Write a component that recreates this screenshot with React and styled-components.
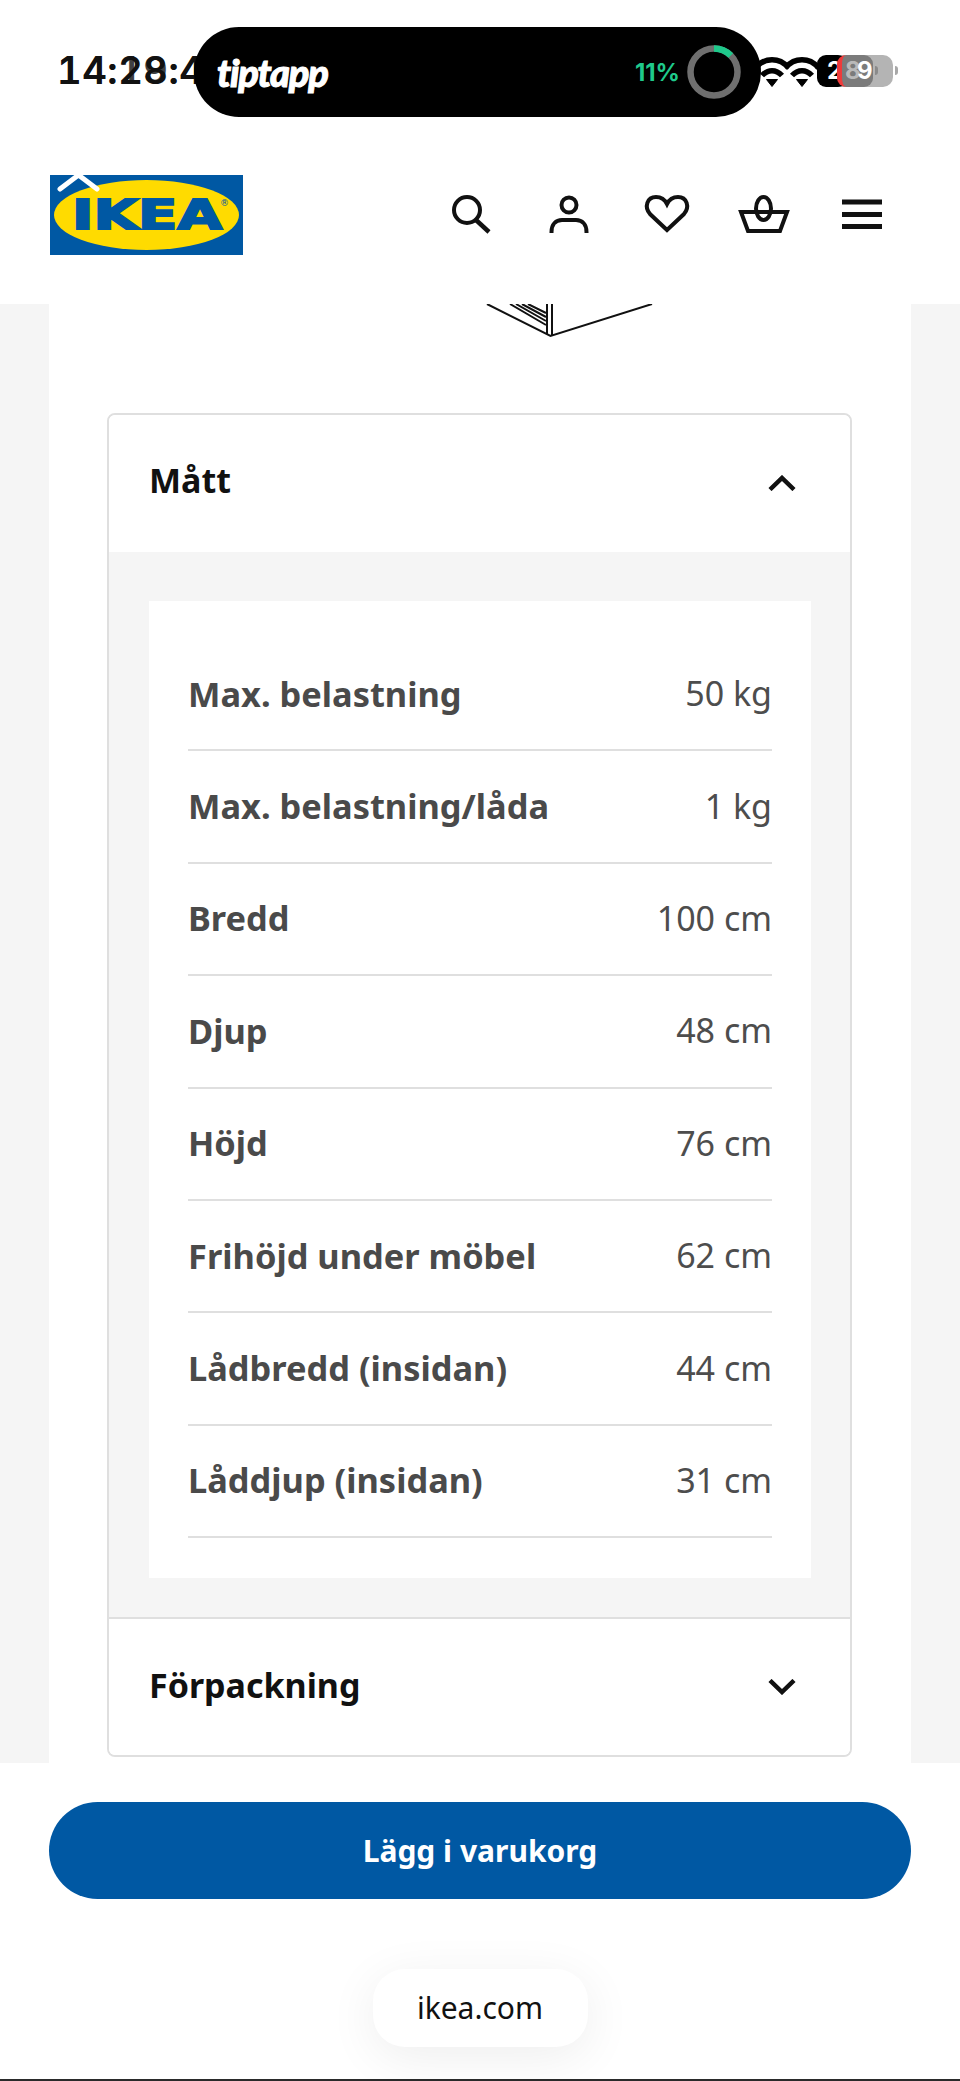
import React from "react"
import styled, { createGlobalStyle } from "styled-components"

const GlobalStyle = createGlobalStyle`
  html, body {
    margin: 0;
    padding: 0;
    background: #ffffff;
  }
  body {
    font-family: "Noto Sans", sans-serif;
  }
`

const Page = styled.div`
  position: relative;
  width: 960px;
  height: 2081px;
  display: flex;
  flex-direction: column;
  overflow: hidden;
  background: #ffffff;
`

const StatusBar = styled.div`
  position: relative;
  height: 144px;
  flex-shrink: 0;
`

const Clock = styled.span`
  position: absolute;
  left: 57px;
  top: 48px;
  font-family: Inter, sans-serif;
  font-size: 38px;
  line-height: 45px;
  font-weight: 600;
  font-variant-numeric: tabular-nums;
  letter-spacing: 0.6px;
  color: #111111;
  opacity: ${(p) => p.$opacity || 1};
`

const Island = styled.div`
  position: absolute;
  left: 194px;
  top: 27px;
  width: 567px;
  height: 90px;
  box-sizing: border-box;
  padding: 0 20px 0 23px;
  display: flex;
  align-items: center;
  justify-content: space-between;
  background: #000000;
  border-radius: 45px;
`

const TipTapp = styled.span`
  font-family: Lato, sans-serif;
  font-size: 38px;
  line-height: 40px;
  font-weight: 900;
  font-style: italic;
  letter-spacing: -1.2px;
  color: #ffffff;
  -webkit-text-stroke: 1px #ffffff;
`

const Progress = styled.div`
  display: flex;
  align-items: center;
  gap: 7px;
`

const Percent = styled.span`
  font-family: Inter, sans-serif;
  font-size: 24px;
  font-weight: 700;
  color: #1fc98b;
`

const Tray = styled.div`
  position: absolute;
  left: 762px;
  top: 54px;
  width: 140px;
  height: 36px;
`

const TrayIcon = styled.svg`
  position: absolute;
  top: 0;
  left: ${(p) => p.$left}px;
`

const BatteryBack = styled.div`
  position: absolute;
  left: 68px;
  top: 1px;
  width: 63px;
  height: 32px;
  border-radius: 10px;
  background: #b4b4b4;
`

const BatteryFront = styled.div`
  position: absolute;
  left: 55px;
  top: 1px;
  width: 30px;
  height: 32px;
  border-radius: 9px;
  background: #000000;
`

const BatteryLevel = styled.div`
  position: absolute;
  left: 75px;
  top: 1px;
  width: 36px;
  height: 32px;
  border-radius: 9px;
  background: #7b7b7b;
  border-left: 5px solid #ef3b3b;
  box-sizing: border-box;
`

const BatteryDigit = styled.span`
  position: absolute;
  left: ${(p) => p.$left}px;
  top: 0;
  font-family: Inter, sans-serif;
  font-size: 24px;
  line-height: 34px;
  font-weight: 700;
  color: ${(p) => p.$color};
`

const BatteryCap = styled.div`
  position: absolute;
  left: ${(p) => p.$left}px;
  top: 12px;
  width: 3px;
  height: 9px;
  border-radius: 0 3px 3px 0;
  background: ${(p) => p.$color};
`

const Header = styled.header`
  height: 160px;
  flex-shrink: 0;
  box-sizing: border-box;
  padding: 31px 72px 0 50px;
  display: flex;
  align-items: flex-start;
  justify-content: space-between;
`

const LogoWrap = styled.div`
  position: relative;
  width: 193px;
  height: 80px;
`

const NavIcons = styled.nav`
  display: flex;
  gap: 45.75px;
  padding-top: 19px;
`

const Backdrop = styled.main`
  flex: 1;
  min-height: 0;
  background: #f5f5f5;
  padding: 0 49px;
`

const Sheet = styled.div`
  height: 100%;
  box-sizing: border-box;
  background: #ffffff;
  padding: 0 59px;
  display: flex;
  flex-direction: column;
`

const Drawing = styled.div`
  height: 109px;
  flex-shrink: 0;
  padding-left: 372px;
`

const Card = styled.section`
  margin-left: -1px;
  border: 2px solid #dfdfdf;
  border-radius: 8px;
  overflow: hidden;
`

const CardHeader = styled.div`
  height: ${(p) => p.$height}px;
  box-sizing: border-box;
  padding: 0 54px ${(p) => p.$lift}px 40px;
  display: flex;
  align-items: center;
  justify-content: space-between;
  background: #ffffff;
`

const ChevronIcon = styled.svg`
  margin-top: 5px;
`

const CardTitle = styled.h3`
  margin: 0;
  font-size: 34px;
  font-weight: 700;
  color: #111111;
`

const CardBody = styled.div`
  height: 1067px;
  box-sizing: border-box;
  background: #f5f5f5;
  border-bottom: 2px solid #dfdfdf;
  padding: 49px 39px 0 40px;
`

const SpecBox = styled.div`
  background: #ffffff;
  padding: 38px 39px 40px;
`

const SpecRow = styled.div`
  height: 112.4px;
  box-sizing: border-box;
  padding-bottom: 2px;
  display: flex;
  align-items: center;
  justify-content: space-between;
  border-bottom: 2px solid #dfdfdf;
`

const SpecLabel = styled.span`
  font-size: 34.4px;
  font-weight: 700;
  color: #4a4a4a;
`

const SpecValue = styled.span`
  font-size: 34px;
  font-weight: 400;
  color: #4d4d4d;
`

const Footer = styled.footer`
  position: absolute;
  left: 0;
  right: 0;
  top: 1763px;
  bottom: 0;
  box-sizing: border-box;
  padding: 39px 49px 0;
  background: #ffffff;
  border-bottom: 2px solid #2a2a2a;
`

const AddButton = styled.button`
  width: 100%;
  height: 97px;
  border: 0;
  border-radius: 49px;
  background: #0058a3;
  color: #ffffff;
  font-family: "Noto Sans", sans-serif;
  font-size: 30px;
  font-weight: 700;
`

const UrlPill = styled.div`
  width: 215px;
  height: 78px;
  box-sizing: border-box;
  padding-bottom: 2px;
  margin: 70px auto 0;
  display: flex;
  align-items: center;
  justify-content: center;
  border-radius: 32px;
  background: #ffffff;
  box-shadow: 0 10px 50px rgba(0, 0, 0, 0.07);
  font-size: 30px;
  color: #111111;
`

const specs = [
  ["Max. belastning", "50 kg"],
  ["Max. belastning/låda", "1 kg"],
  ["Bredd", "100 cm"],
  ["Djup", "48 cm"],
  ["Höjd", "76 cm"],
  ["Frihöjd under möbel", "62 cm"],
  ["Lådbredd (insidan)", "44 cm"],
  ["Låddjup (insidan)", "31 cm"],
]

const NavIcon = ({ children }) => (
  <svg
    width="52"
    height="46"
    viewBox="0 0 52 46"
    fill="none"
    stroke="#111111"
    strokeWidth="4"
  >
    {children}
  </svg>
)

const Chevron = ({ up }) => (
  <ChevronIcon width="28" height="16" viewBox="0 0 28 16" fill="none">
    <path
      d={up ? "M2 14.5 L14 3 L26 14.5" : "M2 1.5 L14 13 L26 1.5"}
      stroke="#111111"
      strokeWidth="4.5"
    />
  </ChevronIcon>
)

const Wifi = ({ left }) => (
  <TrayIcon $left={left} width="36" height="34" viewBox="0 0 36 34" fill="none" stroke="#000" strokeWidth="5.5">
    <path d="M1.5 14 C10 3 26 3 34.5 14" />
    <path d="M8 21.5 C14 15 22 15 28 21.5" />
    <path d="M12.5 25.5 L18 32.5 L23.5 25.5 Z" fill="#000" strokeWidth="1" />
  </TrayIcon>
)

export default function App() {
  return (
    <Page>
      <GlobalStyle />
      <StatusBar>
        <Clock>14:28:4</Clock>
        <Clock $opacity={0.8}>14:19:4</Clock>
        <Island>
          <TipTapp>tiptapp</TipTapp>
          <Progress>
            <Percent>11%</Percent>
            <svg width="54" height="54" viewBox="0 0 54 54" fill="none">
              <circle cx="27" cy="27" r="23.5" stroke="#6f6f6f" strokeWidth="6.5" />
              <path d="M27 3.5 A23.5 23.5 0 0 1 43.8 10.6" stroke="#1fc98b" strokeWidth="6.5" />
            </svg>
          </Progress>
        </Island>
        <Tray>
          <Wifi left={-8} />
          <Wifi left={22} />
          <BatteryBack />
          <BatteryFront />
          <BatteryDigit $left={65} $color="#ffffff">2</BatteryDigit>
          <BatteryLevel />
          <BatteryDigit $left={83} $color="#b9b9b9">8</BatteryDigit>
          <BatteryDigit $left={95} $color="#ffffff">9</BatteryDigit>
          <BatteryCap $left={113} $color="#8a8a8a" />
          <BatteryCap $left={133} $color="#a8a8a8" />
        </Tray>
      </StatusBar>

      <Header>
        <LogoWrap>
          <svg width="193" height="80" viewBox="0 0 193 80">
            <rect width="193" height="80" fill="#0058a3" />
            <ellipse cx="96.5" cy="40" rx="92.5" ry="35" fill="#ffdb00" />
            <text
              x="22"
              y="54"
              fontFamily="'DejaVu Sans', sans-serif"
              fontWeight="700"
              fontSize="40"
              fill="#0058a3"
              textLength="150"
              lengthAdjust="spacingAndGlyphs"
              stroke="#0058a3"
              strokeWidth="2"
            >
              IKEA
            </text>
            <text x="170" y="31" fontFamily="'DejaVu Sans', sans-serif" fontSize="9" fill="#0058a3">
              ®
            </text>
            <path d="M10 14 L28.5 0 L47 14" fill="none" stroke="#ffffff" strokeWidth="5" strokeLinecap="round" />
          </svg>
        </LogoWrap>
        <NavIcons>
          <NavIcon>
            <circle cx="22" cy="16" r="13" />
            <path d="M31 26 L44 38" strokeWidth="4.5" />
          </NavIcon>
          <NavIcon>
            <circle cx="26" cy="11" r="7.5" />
            <path d="M8.5 39 V38 C8.5 30 13 26 19 26 H33 C39 26 43.5 30 43.5 38 V39" />
          </NavIcon>
          <NavIcon>
            <path d="M26 36 L9 20 C3 13 6 3 15 3 C20 3 24 6 26 10 C28 6 32 3 37 3 C46 3 49 13 43 20 Z" />
          </NavIcon>
          <NavIcon>
            <path d="M3 18 H49 L42 37 H10 Z" />
            <ellipse cx="25.5" cy="14.5" rx="7.5" ry="11.5" />
          </NavIcon>
          <NavIcon>
            <path d="M6 8 H46 M6 20.5 H46 M6 32.5 H46" strokeWidth="5" />
          </NavIcon>
        </NavIcons>
      </Header>

      <Backdrop>
        <Sheet>
          <Drawing>
            <svg width="180" height="40" viewBox="0 0 180 40" fill="none" stroke="#111111" strokeWidth="2">
              <path d="M7 0 L70.5 32 L172 0" />
              <path d="M67 0 V30 M72 0 V32" />
              <path d="M30 0 L66 21 M36 0 L66 17 M42 0 L66 13 M48 0 L66 9" />
            </svg>
          </Drawing>
          <Card>
            <CardHeader $height={137} $lift={7}>
              <CardTitle>Mått</CardTitle>
              <Chevron up />
            </CardHeader>
            <CardBody>
              <SpecBox>
                {specs.map(([label, value]) => (
                  <SpecRow key={label}>
                    <SpecLabel>{label}</SpecLabel>
                    <SpecValue>{value}</SpecValue>
                  </SpecRow>
                ))}
              </SpecBox>
            </CardBody>
            <CardHeader $height={136} $lift={5}>
              <CardTitle>Förpackning</CardTitle>
              <Chevron />
            </CardHeader>
          </Card>
        </Sheet>
      </Backdrop>

      <Footer>
        <AddButton>Lägg i varukorg</AddButton>
        <UrlPill>ikea.com</UrlPill>
      </Footer>
    </Page>
  )
}
